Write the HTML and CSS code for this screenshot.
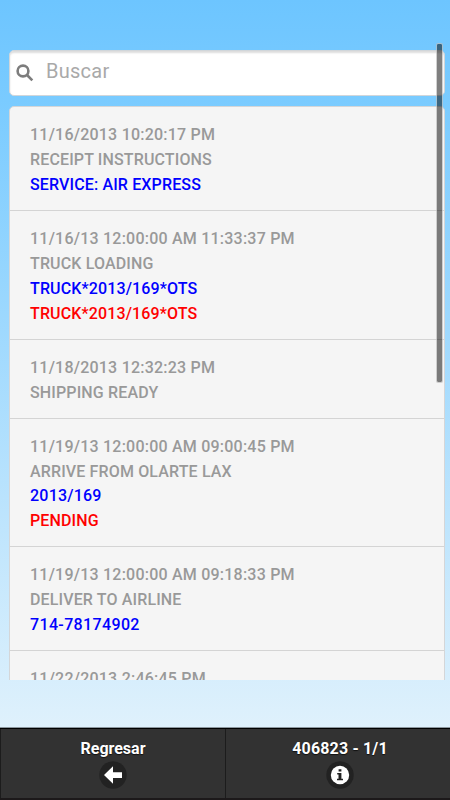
FILE: index.html
```html
<!DOCTYPE html>
<html lang="es">
<head>
<meta charset="utf-8">
<meta name="viewport" content="width=device-width">
<title>Regresar</title>
<link rel="stylesheet" href="styles.css">
</head>
<body>
<main class="content">
  <label class="search">
    <svg class="search-icon" viewBox="0 0 18 18"><circle cx="7" cy="7" r="5.4"/><path d="M11 11L16.3 16.3"/></svg>
    <span class="placeholder">Buscar</span>
  </label>
  <ul class="list">
    <li><p class="num">11/16/2013 10:20:17 PM</p><p>RECEIPT INSTRUCTIONS</p><p class="blue">SERVICE: AIR EXPRESS</p></li>
    <li><p class="num">11/16/13 12:00:00 AM 11:33:37 PM</p><p>TRUCK LOADING</p><p class="blue">TRUCK*2013/169*OTS</p><p class="red">TRUCK*2013/169*OTS</p></li>
    <li><p class="num">11/18/2013 12:32:23 PM</p><p>SHIPPING READY</p></li>
    <li><p class="num">11/19/13 12:00:00 AM 09:00:45 PM</p><p>ARRIVE FROM OLARTE LAX</p><p class="blue num">2013/169</p><p class="red">PENDING</p></li>
    <li><p class="num">11/19/13 12:00:00 AM 09:18:33 PM</p><p>DELIVER TO AIRLINE</p><p class="blue code">714-78174902</p></li>
    <li><p class="num">11/22/2013 2:46:45 PM</p></li>
  </ul>
  <div class="scrollbar"></div>
</main>
<footer class="footer">
  <div class="tab"><span>Regresar</span>
    <svg class="tab-icon" viewBox="0 0 28 28"><circle class="disc" cx="14" cy="14" r="13.7"/><path class="white" d="M5 14L14 5.2V11.2H23V17H14V22.8Z"/></svg>
  </div>
  <div class="tab info"><span>406823 - 1/1</span>
    <svg class="tab-icon" viewBox="0 0 28 28"><circle class="disc" cx="14" cy="14" r="13.7"/><circle class="white" cx="14" cy="14" r="9.2"/><path class="mark" d="M12.6 8.2h2.8v2.3h-2.8zM11.2 12h4.2v5.7H17v1.6h-6v-1.6h1.5v-4.1h-1.3z"/></svg>
  </div>
</footer>
</body>
</html>
```
FILE: styles.css
```css
* { box-sizing: border-box; }
body {
  margin: 0;
  height: 800px;
  overflow: hidden;
  display: flex;
  flex-direction: column;
  font-family: Roboto, "Liberation Sans", sans-serif;
  background: linear-gradient(#6dc5ff 0, #7acbff 100px, #dff1fc 728px);
}
.content {
  position: relative;
  height: 680px;
  padding: 50px 5px 0 9px;
  overflow: hidden;
}
.search {
  display: flex;
  align-items: center;
  height: 46px;
  padding: 0 7px 3px 6px;
  background: #fff;
  border: 1px solid #d1d6da;
  border-radius: 5px;
  box-shadow: inset 0 2px 2px #ddd;
  color: #a9a9a9;
  font-size: 20px;
  letter-spacing: .25px;
}
.placeholder { padding-bottom: 2px; }
.search-icon {
  width: 18px;
  height: 18px;
  margin: 3px 12px 0 0;
  fill: none;
  stroke: #7d7d7d;
  stroke-width: 2.6;
}
.list {
  list-style: none;
  margin: 10px 0 0;
  padding: 0;
  background: #f5f5f5;
  border: 1px solid #d4d6d8;
  border-radius: 5px;
}
.list li {
  padding: 16px 20px 12px;
  border-bottom: 1px solid #d4d4d4;
}
.list p {
  margin: 0;
  color: #999;
  font-size: 16px;
  font-weight: 500;
  line-height: 24.95px;
  letter-spacing: .14px;
  white-space: nowrap;
}
.list .num { letter-spacing: .22px; }
.list .code { letter-spacing: .36px; }
.list .blue { color: #00f; }
.list .red { color: #f00; }
.scrollbar {
  position: absolute;
  left: 436px;
  top: 43px;
  width: 7px;
  height: 340px;
  border: 1px solid rgba(190, 190, 190, .7);
  border-radius: 2px;
  background: rgba(0, 0, 0, .5);
  background-clip: padding-box;
}
.footer {
  display: flex;
  height: 72px;
  margin-top: 48px;
  background: #323232;
  border-top: 1px solid #000;
  border-bottom: 2px solid #1c191a;
  box-shadow: 0 -1px 0 #8c979e;
}
.tab {
  flex: 0 0 50%;
  display: flex;
  flex-direction: column;
  align-items: center;
  padding-top: 10px;
  border-left: 1px solid #1c1c1c;
  color: #fff;
  font-size: 16px;
  font-weight: 700;
  line-height: 19px;
  text-shadow: 0 1px 1px #111;
}
.info { padding-left: 4px; letter-spacing: .15px; }
.tab-icon { width: 28px; height: 28px; margin-top: 3px; }
.disc { fill: #222; }
.white { fill: #fff; }
.mark { fill: #222; }
```
